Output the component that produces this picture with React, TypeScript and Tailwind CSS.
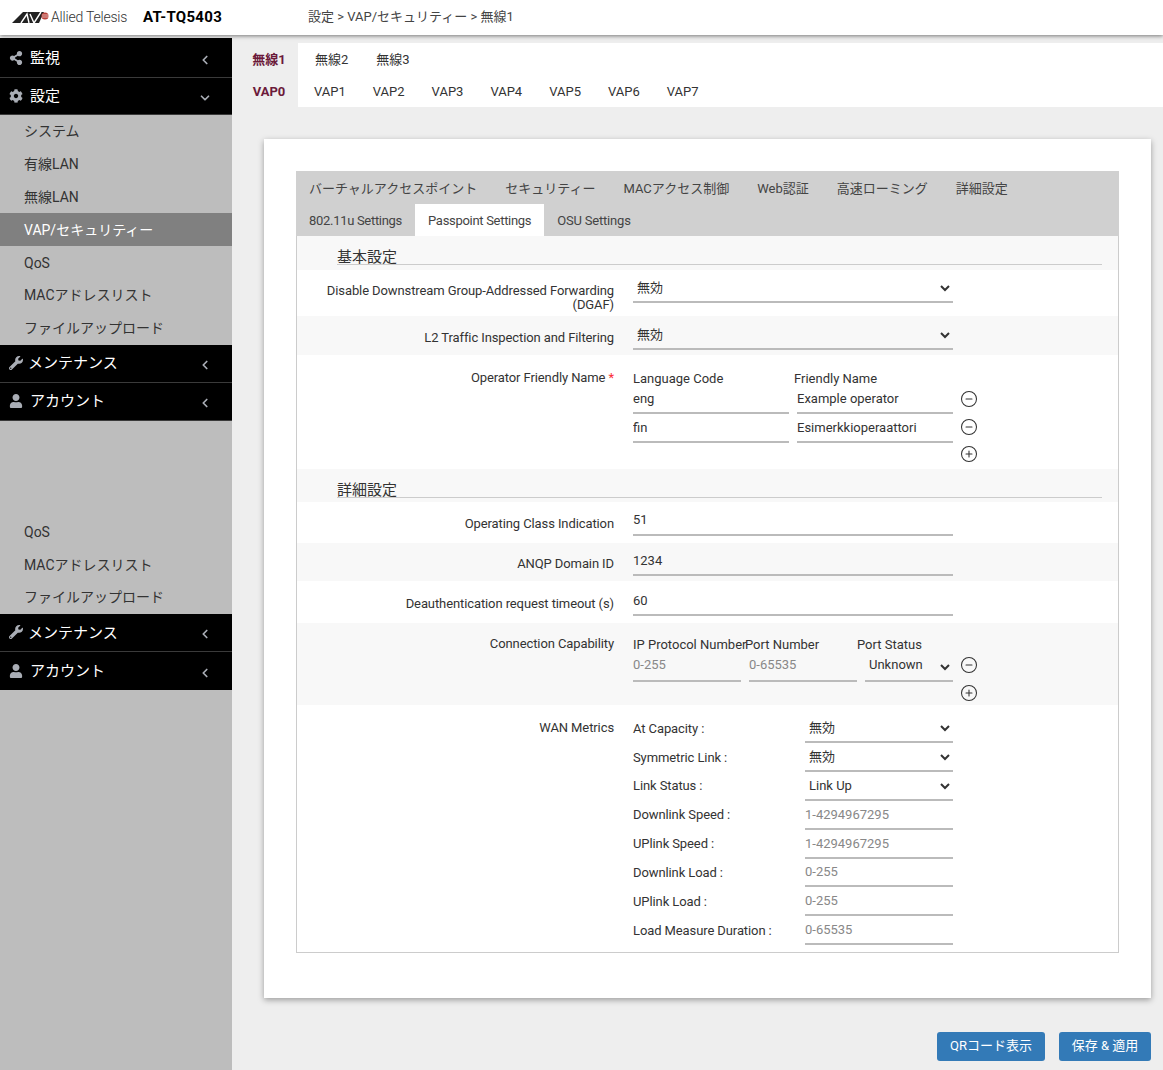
import { ReactNode } from "react";
import { ChevronDown, ChevronLeft, CirclePlus, CircleMinus } from "lucide-react";
import { FaShareAlt, FaCog, FaWrench, FaUser } from "react-icons/fa";

const NavHead = ({ icon, label, open = false, h = "h-[38px]", iw = "w-[21px]" }: { icon: ReactNode; label: string; open?: boolean; h?: string; iw?: string }) => (
  <div className={`flex ${h} items-center border-b border-[#3a3a3a] bg-black pl-[9px] pr-[20px] text-[15px] text-white last:border-0`}>
    <span className={`flex ${iw} text-[#a9adb5]`}>{icon}</span>
    <span className="flex-1 pt-px">{label}</span>
    <span className="pt-1 text-[#a9adb5]">
      {open ? <ChevronDown className="h-[14px] w-[14px]" strokeWidth={3} /> : <ChevronLeft className="h-[14px] w-[14px]" strokeWidth={3} />}
    </span>
  </div>
);

const NavItem = ({ label, active = false }: { label: string; active?: boolean }) => (
  <div className={`flex h-[32.8px] items-center pl-6 pt-px text-[14px] ${active ? "bg-[#808080] text-white" : "text-[#333]"}`}>{label}</div>
);

const Sidebar = () => (
  <aside className="mt-[3px] w-[232px] shrink-0 bg-[#bdbdbd]">
    <NavHead h="h-[40px]" icon={<FaShareAlt className="h-[14px] w-[14px]" />} label="監視" />
    <NavHead h="h-[37px]" icon={<FaCog className="h-[14px] w-[14px]" />} label="設定" open />
    <NavItem label="システム" />
    <NavItem label="有線LAN" />
    <NavItem label="無線LAN" />
    <NavItem label="VAP/セキュリティー" active />
    <NavItem label="QoS" />
    <NavItem label="MACアドレスリスト" />
    <NavItem label="ファイルアップロード" />
    <NavHead iw="w-[19px]" icon={<FaWrench className="h-[14px] w-[14px]" />} label="メンテナンス" />
    <NavHead icon={<FaUser className="h-[14px] w-[14px]" />} label="アカウント" />
    <div className="h-[94.8px]" />
    <NavItem label="QoS" />
    <NavItem label="MACアドレスリスト" />
    <NavItem label="ファイルアップロード" />
    <NavHead iw="w-[19px]" icon={<FaWrench className="h-[14px] w-[14px]" />} label="メンテナンス" />
    <NavHead icon={<FaUser className="h-[14px] w-[14px]" />} label="アカウント" />
  </aside>
);

const Select = ({ value, options, h = "h-[29px]", className = "" }: { value: string; options: string[]; h?: string; className?: string }) => (
  <select defaultValue={value} className={`${h} border-b-2 border-[#bbb] bg-transparent text-[13px] text-[#333] outline-none ${className}`}>
    {options.map((o) => (
      <option key={o}>{o}</option>
    ))}
  </select>
);

const Input = ({ value, placeholder, h = "h-[29px]", className = "" }: { value?: string; placeholder?: string; h?: string; className?: string }) => (
  <input
    readOnly
    defaultValue={value}
    placeholder={placeholder}
    className={`${h} border-b-2 border-[#bbb] bg-transparent text-[13px] text-[#333] outline-none placeholder:text-[#888] ${className}`}
  />
);

const Section = ({ title }: { title: string }) => (
  <div className="bg-[#f8f8f8] pl-10 pr-4">
    <div className="h-[29px] border-b border-[#ccc] pt-[9px] text-[15px] leading-[24px] text-[#333]">{title}</div>
  </div>
);

const Row = ({ label, required, h, pt, alt, children }: { label: ReactNode; required?: boolean; h: string; pt: string; alt?: boolean; children: ReactNode }) => (
  <div className={`flex ${h} ${alt ? "bg-[#f8f8f8]" : "bg-white"}`}>
    <div className={`w-[317px] ${pt} text-right text-[13px] leading-[14px] tracking-[-0.1px] text-[#333]`}>
      {label}
      {required && <span className="text-red-500"> *</span>}
    </div>
    <div className="ml-[19px] w-[360px]">{children}</div>
  </div>
);

const WanRow = ({ label, children }: { label: string; children: ReactNode }) => (
  <div className="flex h-[28.9px] items-center">
    <span className="w-[172px] text-[13px] tracking-[-0.1px] text-[#333]">{label}</span>
    {children}
  </div>
);

const Icons = ({ minus, h = "h-[29px]" }: { minus?: boolean; h?: string }) => (
  <div className={`flex w-[32px] items-center justify-center ${h}`}>
    {minus ? <CircleMinus className="h-[18px] w-[18px] text-[#333]" strokeWidth={1.4} /> : <CirclePlus className="h-[18px] w-[18px] text-[#333]" strokeWidth={1.4} />}
  </div>
);

const Tab = ({ label, active, className = "" }: { label: string; active?: boolean; className?: string }) => (
  <div className={`flex h-[32px] items-center px-[13px] pt-px text-[13px] ${active ? "bg-white" : ""} text-[#444] ${className}`}>{label}</div>
);

export default function App() {
  const enabled = ["無効", "有効"];
  return (
    <div className="flex h-[1070px] w-[1163px] flex-col overflow-hidden bg-[#eee] [font-family:Roboto,Noto_Sans_CJK_JP,sans-serif]">
      <header className="relative z-10 flex h-[35px] shrink-0 items-center bg-white pb-[1px] shadow-[0_1px_4px_rgba(0,0,0,0.5)]">
        <svg viewBox="0 0 38 12" className="ml-3 h-[12px] w-[38px]">
          <path d="M0 12 L11 1 H32 L27 12 Z" fill="#222" />
          <path d="M9 12 L15 3 L17 12 M18 3 L22 12 L29 1" stroke="#fff" strokeWidth="1.4" fill="none" />
          <circle cx="33" cy="5" r="3.6" fill="#b9413a" />
          <path d="M30 4 H37 M30 6 H37" stroke="#fff" strokeWidth="0.6" />
        </svg>
        <span className="ml-[1px] w-[92px] text-[14px] font-light tracking-[-0.2px] text-[#333]">Allied Telesis</span>
        <span className="w-[165px] text-[15px] font-bold tracking-[0.3px] text-black">AT-TQ5403</span>
        <span className="text-[13px] text-[#444]">設定 &gt; VAP/セキュリティー &gt; 無線1</span>
      </header>
      <div className="flex flex-1">
        <Sidebar />
        <main className="flex-1 pt-2">
          <div className="ml-2 bg-white">
            <div className="flex h-8 items-center text-[13px]">
              <div className="flex h-full w-[58px] items-center justify-center bg-[#eee] pt-px font-bold text-[#6b1a3a]">無線1</div>
              <span className="ml-[17px] pt-px text-[#333]">無線2</span>
              <span className="ml-[28px] pt-px text-[#333]">無線3</span>
            </div>
            <div className="flex h-8 items-center text-[13px]">
              <div className="flex h-full w-[58px] items-center justify-center bg-[#eee] pt-px font-bold text-[#6b1a3a]">VAP0</div>
              {["VAP1", "VAP2", "VAP3", "VAP4", "VAP5", "VAP6", "VAP7"].map((v, i) => (
                <span key={v} className={`${i === 0 ? "ml-4" : "ml-[27px]"} pt-px text-[#333]`}>
                  {v}
                </span>
              ))}
            </div>
          </div>
          <div className="ml-8 mr-3 mt-8 h-[859px] bg-white p-8 shadow-[0_2px_6px_rgba(0,0,0,0.35)]">
            <div className="bg-[#d0d0d0]">
              <div className="flex h-[33px] items-center gap-[2px] pt-px">
                {["バーチャルアクセスポイント", "セキュリティー", "MACアクセス制御", "Web認証", "高速ローミング", "詳細設定"].map((t) => (
                  <Tab key={t} label={t} />
                ))}
              </div>
              <div className="flex">
                <Tab label="802.11u Settings" className="tracking-[-0.3px]" />
                <Tab label="Passpoint Settings" active className="tracking-[-0.3px]" />
                <Tab label="OSU Settings" className="tracking-[-0.2px]" />
              </div>
            </div>
            <div className="border border-t-0 border-[#ccc]">
              <Section title="基本設定" />
              <div className="h-[5px] bg-[#f8f8f8]" />
              <Row h="h-[46px]" pt="pt-[14px]" label={<>Disable Downstream Group-Addressed Forwarding<br />(DGAF)</>}>
                <Select value="無効" options={enabled} h="h-[30px]" className="mt-[3px] w-[320px]" />
              </Row>
              <Row h="h-[39px]" pt="pt-[15px]" alt label="L2 Traffic Inspection and Filtering">
                <Select value="無効" options={enabled} h="h-[30px]" className="mt-[4px] w-[320px]" />
              </Row>
              <Row h="h-[114px]" pt="pt-[16px]" required label="Operator Friendly Name">
                <div className="flex pt-[15px] text-[13px] leading-[17px] text-[#333]">
                  <span className="w-[161px]">Language Code</span>
                  <span>Friendly Name</span>
                </div>
                <div className="flex">
                  <Input value="eng" h="h-[27px]" className="w-[156px] pb-[3px]" />
                  <Input value="Example operator" h="h-[27px]" className="ml-2 w-[156px] pb-[3px]" />
                  <Icons minus h="h-[23px]" />
                </div>
                <div className="flex">
                  <Input value="fin" className="w-[156px] pb-px" />
                  <Input value="Esimerkkioperaattori" className="ml-2 w-[156px] pb-px" />
                  <Icons minus h="h-[26px]" />
                </div>
                <div className="flex pl-[320px]">
                  <Icons h="h-[22px]" />
                </div>
              </Row>
              <Section title="詳細設定" />
              <div className="h-[4px] bg-[#f8f8f8]" />
              <Row h="h-[41px]" pt="pt-[15px]" label="Operating Class Indication">
                <Input value="51" h="h-[30px]" className="mt-[4px] w-[320px] pb-[1px]" />
              </Row>
              <Row h="h-[38px]" pt="pt-[14px]" alt label="ANQP Domain ID">
                <Input value="1234" className="mt-[4px] w-[320px] pb-[1px]" />
              </Row>
              <Row h="h-[42px]" pt="pt-[16px]" label="Deauthentication request timeout (s)">
                <Input value="60" className="mt-[6px] w-[320px]" />
              </Row>
              <Row h="h-[82px]" pt="pt-[14px]" alt label="Connection Capability">
                <div className="flex pt-[13px] text-[13px] leading-[17px] text-[#333]">
                  <span className="w-[112px] whitespace-nowrap">IP Protocol Number</span>
                  <span className="w-[112px] whitespace-nowrap">Port Number</span>
                  <span>Port Status</span>
                </div>
                <div className="flex">
                  <Input placeholder="0-255" className="w-[108px] pb-[4px]" />
                  <Input placeholder="0-65535" className="ml-2 w-[108px] pb-[4px]" />
                  <Select value="Unknown" options={["Unknown", "Open", "Closed"]} className="ml-2 w-[88px] pb-[4px]" />
                  <Icons minus h="h-[24px]" />
                </div>
                <div className="flex pl-[320px]">
                  <Icons h="h-[21px]" />
                </div>
              </Row>
              <Row h="h-[247px]" pt="pt-[16px]" label="WAN Metrics">
                <div className="w-[320px] pt-[9px]">
                  <WanRow label="At Capacity :"><Select value="無効" options={enabled} className="w-[148px]" /></WanRow>
                  <WanRow label="Symmetric Link :"><Select value="無効" options={enabled} className="w-[148px]" /></WanRow>
                  <WanRow label="Link Status :"><Select value="Link Up" options={["Link Up", "Link Down"]} className="w-[148px]" /></WanRow>
                  <WanRow label="Downlink Speed :"><Input placeholder="1-4294967295" className="w-[148px]" /></WanRow>
                  <WanRow label="UPlink Speed :"><Input placeholder="1-4294967295" className="w-[148px]" /></WanRow>
                  <WanRow label="Downlink Load :"><Input placeholder="0-255" className="w-[148px]" /></WanRow>
                  <WanRow label="UPlink Load :"><Input placeholder="0-255" className="w-[148px]" /></WanRow>
                  <WanRow label="Load Measure Duration :"><Input placeholder="0-65535" className="w-[148px]" /></WanRow>
                </div>
              </Row>
            </div>
          </div>
          <div className="mr-3 mt-[34px] flex justify-end gap-[14px]">
            <button className="h-[29px] w-[108px] rounded-[3px] bg-[#337ab7] pb-px text-[13px] text-white">QRコード表示</button>
            <button className="h-[29px] w-[92px] rounded-[3px] bg-[#337ab7] pb-px text-[13px] text-white">保存 &amp; 適用</button>
          </div>
        </main>
      </div>
    </div>
  );
}
